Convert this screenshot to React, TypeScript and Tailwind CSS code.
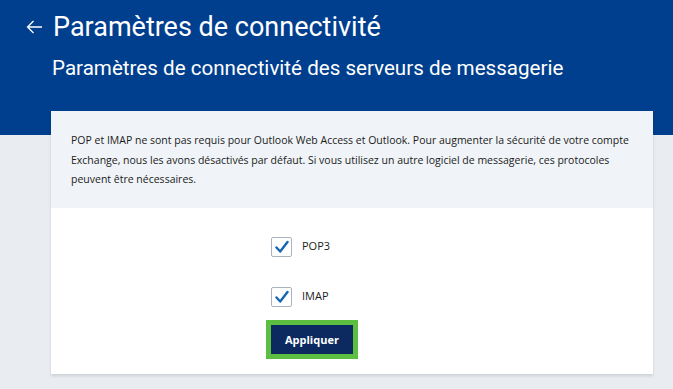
import React from "react";

function CheckRow({ label }: { label: string }) {
  return (
    <label className="flex items-center gap-[10px]">
      <span className="grid h-[20px] w-[21px] place-items-center rounded-[2px] border border-[#aab3c0] bg-white">
        <svg width="14" height="14" viewBox="0 0 14 14" fill="none">
          <path d="M1.5 7.5 L5.2 11.5 L12.5 2" stroke="#1467b0" strokeWidth="2.4" strokeLinecap="round" strokeLinejoin="round" />
        </svg>
      </span>
      <span className="text-[11px] text-[#1b1b1b]">{label}</span>
    </label>
  );
}

export default function App() {
  return (
    <div className="min-h-screen bg-[#e9edf1] font-['Open_Sans',sans-serif]">
      <header className="h-[135px] bg-[#003e8e] pl-[26px] pt-[11px] text-white">
        <div className="flex items-center gap-[10px] font-['Roboto',sans-serif]">
          <svg width="17" height="14" viewBox="0 0 17 14" fill="none">
            <path d="M16 7 H1.5 M7.5 1 L1.5 7 L7.5 13" stroke="#fff" strokeWidth="1.3" />
          </svg>
          <h1 className="text-[27px] font-normal leading-[32px]">Paramètres de connectivité</h1>
        </div>
        <h2 className="mt-[12px] pl-[26px] font-['Roboto',sans-serif] text-[20.6px] font-normal leading-[26px]">
          Paramètres de connectivité des serveurs de messagerie
        </h2>
      </header>

      <main className="relative mx-[51px] -mt-[24px] w-[602px] bg-white shadow-[0_2px_3px_rgba(0,0,0,0.12)]">
        <p className="bg-[#f0f4f8] pb-[18px] pl-[20px] pr-[8px] pt-[20px] text-[10.5px] leading-[19.5px] text-[#1b1b1b]">
          POP et IMAP ne sont pas requis pour Outlook Web Access et Outlook. Pour augmenter la sécurité de votre compte
          <br />
          Exchange, nous les avons désactivés par défaut. Si vous utilisez un autre logiciel de messagerie, ces protocoles
          <br />
          peuvent être nécessaires.
        </p>
        <div className="flex flex-col items-start pb-[15px] pl-[220px] pt-[29px]">
          <CheckRow label="POP3" />
          <div className="mt-[30px]">
            <CheckRow label="IMAP" />
          </div>
          <button className="-ml-[5px] mt-[13px] border-[5px] border-[#5dbf41] bg-[#0c2a5f] px-[14px] py-[6px] text-[11px] font-bold leading-[17px] text-white">
            Appliquer
          </button>
        </div>
      </main>
    </div>
  );
}
